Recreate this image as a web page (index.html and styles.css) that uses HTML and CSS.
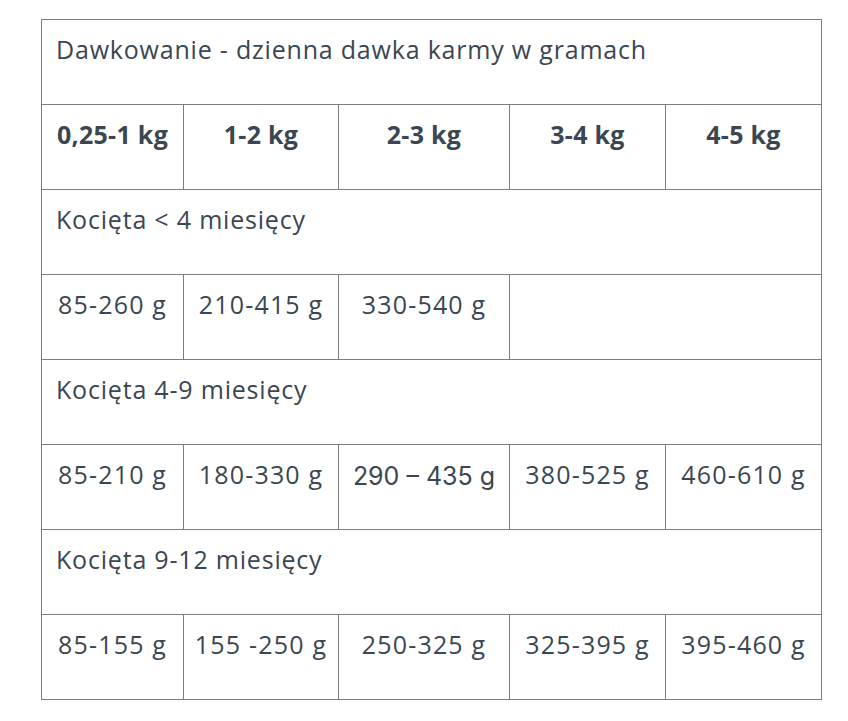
FILE: index.html
```html
<!DOCTYPE html>
<html lang="pl">
<head>
<meta charset="utf-8">
<title>Dawkowanie</title>
<link rel="stylesheet" href="styles.css">
</head>
<body>
<table class="dose">
  <colgroup>
    <col class="c1"><col class="c2"><col class="c3"><col class="c4"><col class="c5">
  </colgroup>
  <tbody>
    <tr><td class="title" colspan="5">Dawkowanie - dzienna dawka karmy w gramach</td></tr>
    <tr class="head">
      <td>0,25-1 kg</td><td>1-2 kg</td><td>2-3 kg</td><td>3-4 kg</td><td>4-5 kg</td>
    </tr>
    <tr><td class="title" colspan="5">Kocięta &lt; 4 miesięcy</td></tr>
    <tr class="vals">
      <td>85-260 g</td><td>210-415 g</td><td>330-540 g</td><td class="empty" colspan="2"></td>
    </tr>
    <tr><td class="title" colspan="5">Kocięta 4-9 miesięcy</td></tr>
    <tr class="vals">
      <td>85-210 g</td><td>180-330 g</td><td class="alt">290 – 435 g</td><td>380-525 g</td><td>460-610 g</td>
    </tr>
    <tr><td class="title" colspan="5">Kocięta 9-12 miesięcy</td></tr>
    <tr class="vals">
      <td>85-155 g</td><td>155 -250 g</td><td>250-325 g</td><td>325-395 g</td><td>395-460 g</td>
    </tr>
  </tbody>
</table>
</body>
</html>
```
FILE: styles.css
```css
html, body {
  margin: 0;
  padding: 0;
  background: #ffffff;
}
body {
  padding: 19px 0 0 41px;
  font-family: "Open Sans", "Noto Sans", "Liberation Sans", sans-serif;
  color: #3b4653;
}
.dose {
  border-collapse: collapse;
  table-layout: fixed;
  width: 781px;
}
.c1 { width: 142px; }
.c2 { width: 155px; }
.c3 { width: 171px; }
.c4 { width: 156px; }
.c5 { width: 156px; }
.dose td {
  border: 1px solid #7d7d7d;
  height: 85px;
  box-sizing: border-box;
  vertical-align: top;
  padding: 12px 0 0;
  font-size: 25px;
  line-height: 34px;
  letter-spacing: 1.2px;
  text-align: center;
  white-space: nowrap;
}
.dose td.title {
  text-align: left;
  padding-left: 14px;
  letter-spacing: 0.8px;
}
.head td {
  font-weight: 700;
  letter-spacing: 0.3px;
}
.dose td.alt {
  font-family: "Inter", "Liberation Sans", sans-serif;
  font-size: 25px;
  padding-top: 14px;
  letter-spacing: 0;
}
```
